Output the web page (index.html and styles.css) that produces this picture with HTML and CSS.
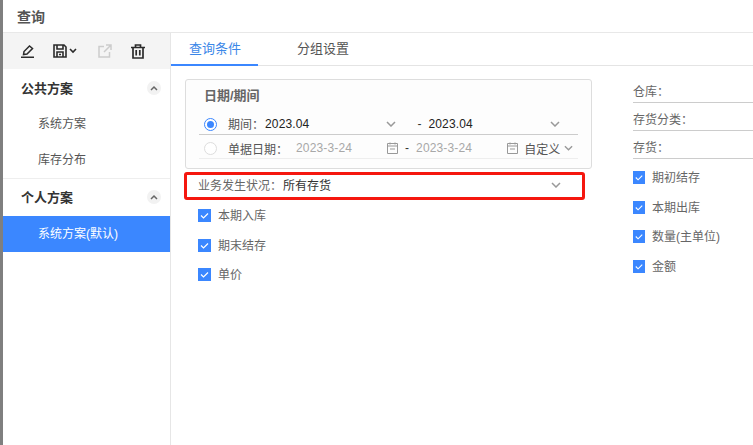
FILE: index.html
```html
<!DOCTYPE html>
<html lang="zh">
<head>
<meta charset="utf-8">
<title>查询</title>
<link rel="stylesheet" href="styles.css">
</head>
<body>
<div class="page">
  <div class="strip"></div>
  <div class="dialog">
    <header class="title">查询</header>
    <div class="body">
      <aside class="side">
        <div class="toolbar">
          <svg class="ic pen" viewBox="0 0 13 14"><path d="M0 13.200h13M2.500 10.500l.5-3L8.500 2l3 2.500L6 10z" fill="none" stroke="#2b2b2b" stroke-width="1.500"/></svg>
          <svg class="ic save" viewBox="0 0 14 14"><path d="M1 1h10l2 2v10H1zM4 1v4h6V1M4 13V8h6v5M6 10.500h2" fill="none" stroke="#2b2b2b" stroke-width="1.600"/></svg>
          <svg class="ic caret" viewBox="0 0 8 6"><path d="M1 1l3 3 3-3" fill="none" stroke="#2b2b2b" stroke-width="1.600"/></svg>
          <svg class="ic ext" viewBox="0 0 14 14"><path d="M11.500 8v5H1V2.500h5M8 1h5v5M13 1L6 8" fill="none" stroke="#ccc" stroke-width="1.500"/></svg>
          <svg class="ic bin" viewBox="0 0 14 15"><path d="M0 3.500h14M4.500 3.500V1h5v2.500M2 3.500V14h10V3.500M5.200 6v5.500M8.800 6v5.500" fill="none" stroke="#2b2b2b" stroke-width="1.700"/></svg>
        </div>
        <div class="sec"><span>公共方案</span><i class="up"><svg viewBox="0 0 8 6"><path d="M1 5l3-3 3 3" fill="none" stroke="#666" stroke-width="1.500"/></svg></i></div>
        <div class="item">系统方案</div>
        <div class="item">库存分布</div>
        <div class="sec sec-b"><span>个人方案</span><i class="up"><svg viewBox="0 0 8 6"><path d="M1 5l3-3 3 3" fill="none" stroke="#666" stroke-width="1.500"/></svg></i></div>
        <div class="item active">系统方案(默认)</div>
      </aside>
      <main class="main">
        <nav class="tabs">
          <span class="tab on">查询条件</span>
          <span class="tab">分组设置</span>
        </nav>
        <div class="content">
          <section class="left">
            <div class="group">
              <div class="group-title">日期/期间</div>
              <div class="row row-a">
                <span class="radio on"></span>
                <span class="lab">期间：</span><span class="val v1">2023.04</span>
                <svg class="chev c1" viewBox="0 0 10 6"><path d="M1 1l4 4 4-4" fill="none" stroke="#999" stroke-width="1.500"/></svg>
                <span class="dash">-</span><span class="val v2">2023.04</span>
                <svg class="chev c2" viewBox="0 0 10 6"><path d="M1 1l4 4 4-4" fill="none" stroke="#999" stroke-width="1.500"/></svg>
              </div>
              <div class="row row-b">
                <span class="radio"></span>
                <span class="lab l2">单据日期：</span><span class="val dim d1">2023-3-24</span>
                <svg class="cal" viewBox="0 0 11 12"><path d="M.5 1.500h10v10H.5zM.5 4h10M3 .5v2M8 .5v2M3 7h5" fill="none" stroke="#999"/></svg>
                <span class="dash d">-</span><span class="val dim d2">2023-3-24</span>
                <svg class="cal c3" viewBox="0 0 11 12"><path d="M.5 1.500h10v10H.5zM.5 4h10M3 .5v2M8 .5v2M3 7h5" fill="none" stroke="#999"/></svg>
                <span class="lab cust">自定义</span>
                <svg class="chev c4" viewBox="0 0 10 6"><path d="M1 1l4 4 4-4" fill="none" stroke="#999" stroke-width="1.500"/></svg>
              </div>
            </div>
            <div class="status">
              <span class="lab gray">业务发生状况：</span><span class="lab">所有存货</span>
              <svg class="chev c5" viewBox="0 0 10 6"><path d="M1 1l4 4 4-4" fill="none" stroke="#999" stroke-width="1.500"/></svg>
              <div class="redbox"></div>
            </div>
            <div class="checks">
              <label class="chk"><span class="box"><svg viewBox="0 0 13 13"><path d="M3 6.500l2.500 2.500L10 4.500" fill="none" stroke="#fff" stroke-width="1.200"/></svg></span>本期入库</label>
              <label class="chk"><span class="box"><svg viewBox="0 0 13 13"><path d="M3 6.500l2.500 2.500L10 4.500" fill="none" stroke="#fff" stroke-width="1.200"/></svg></span>期末结存</label>
              <label class="chk"><span class="box"><svg viewBox="0 0 13 13"><path d="M3 6.500l2.500 2.500L10 4.500" fill="none" stroke="#fff" stroke-width="1.200"/></svg></span>单价</label>
            </div>
          </section>
          <section class="right">
            <div class="field">仓库：</div>
            <div class="field">存货分类：</div>
            <div class="field">存货：</div>
            <div class="checks r">
              <label class="chk"><span class="box"><svg viewBox="0 0 13 13"><path d="M3 6.500l2.500 2.500L10 4.500" fill="none" stroke="#fff" stroke-width="1.200"/></svg></span>期初结存</label>
              <label class="chk"><span class="box"><svg viewBox="0 0 13 13"><path d="M3 6.500l2.500 2.500L10 4.500" fill="none" stroke="#fff" stroke-width="1.200"/></svg></span>本期出库</label>
              <label class="chk"><span class="box"><svg viewBox="0 0 13 13"><path d="M3 6.500l2.500 2.500L10 4.500" fill="none" stroke="#fff" stroke-width="1.200"/></svg></span>数量(主单位)</label>
              <label class="chk"><span class="box"><svg viewBox="0 0 13 13"><path d="M3 6.500l2.500 2.500L10 4.500" fill="none" stroke="#fff" stroke-width="1.200"/></svg></span>金额</label>
            </div>
          </section>
        </div>
      </main>
    </div>
  </div>
</div>
</body>
</html>
```
FILE: styles.css
```css
* { box-sizing: border-box; }
html, body { margin: 0; height: 100%; overflow: hidden; background: #fff; }
body { font-family: "Liberation Sans", "Noto Sans CJK SC", sans-serif; font-size: 12px; color: #444; }
.page { display: flex; width: 753px; height: 445px; }
.strip { width: 3px; background: #7f7f7f; flex: none; }
.dialog { flex: 1; display: flex; flex-direction: column; min-width: 0; }
.title { height: 33px; flex: none; padding: 8px 0 0 14px; font-size: 14px; line-height: 18px; font-weight: bold; color: #555; border-bottom: 1px solid #e8e8e8; }
.body { flex: 1; display: flex; min-height: 0; }

.side { width: 168px; flex: none; border-right: 1px solid #e6e6e6; }
.toolbar { height: 36px; background: #f4f4f4; display: flex; align-items: center; padding-left: 18px; }
.ic { display: block; flex: none; }
.pen { width: 13px; height: 14px; }
.save { width: 14px; height: 14px; margin-left: 19px; }
.caret { width: 8px; height: 6px; margin-left: 2px; }
.ext { width: 14px; height: 14px; margin-left: 21px; }
.bin { width: 14px; height: 15px; margin-left: 19px; }
.sec { height: 37px; display: flex; align-items: center; justify-content: space-between; padding: 0 9px 1px 18px; font-size: 13px; font-weight: bold; color: #333; }
.sec-b { height: 38px; border-top: 1px solid #eee; padding-bottom: 3px; }
.up { width: 14px; height: 14px; border-radius: 50%; background: #f2f2f2; display: flex; align-items: center; justify-content: center; margin-top: 2px; }
.up svg { width: 8px; height: 6px; display: block; }
.item { height: 36px; line-height: 36px; padding-left: 35px; color: #555; }
.active { background: #3b87ff; color: #fff; font-weight: normal; }

.main { flex: 1; min-width: 0; }
.tabs { height: 33px; display: flex; border-bottom: 1px solid #e4e4e4; font-size: 13px; }
.tab { width: 87px; text-align: center; line-height: 31px; color: #555; }
.tab + .tab { width: auto; padding-left: 39px; }
.tab.on { color: #3b87e8; border-bottom: 2px solid #3b87ff; height: 33px; padding-left: 1px; }
.content { display: flex; padding: 9px 0 0 14px; }
.left { width: 407px; flex: none; margin-top: 4px; }
.right { margin-left: 41px; flex: 1; color: #666; }

.group { height: 90px; border: 1px solid #ddd; border-radius: 3px; padding: 0 13px; background: #fdfdfd; }
.group-title { font-size: 13px; font-weight: bold; color: #666; line-height: 18px; margin: 7px 0 0 5px; height: 18px; }
.row { display: flex; align-items: center; color: #555; }
.row-a { height: 28px; border-bottom: 1px solid #ccc; padding-top: 6px; margin-top: 2px; }
.row-b { height: 24px; border-bottom: 1px solid #eee; padding-top: 3px; }
.radio { width: 13px; height: 13px; border-radius: 50%; border: 1px solid #ddd; margin-left: 5px; flex: none; background: #fff; position: relative; }
.radio.on { border-color: #3b87ff; margin-top: 2px; }
.radio.on::after { content: ""; position: absolute; left: 2px; top: 2px; width: 7px; height: 7px; border-radius: 50%; background: #3b87ff; }
.lab { white-space: nowrap; }
.row .lab { margin-left: 11px; }
.val { color: #222; white-space: nowrap; letter-spacing: .15px; }
.dim { color: #a8a8a8; }
.v1 { margin-left: 1px; }
.chev { width: 10px; height: 6px; display: block; flex: none; }
.c1 { margin-left: 77px; }
.dash { color: #333; margin-left: 21px; width: 4px; }
.v2 { margin-left: 7px; }
.c2 { margin-left: 77px; }
.d1 { margin-left: 8px; }
.cal { width: 11px; height: 12px; flex: none; margin-left: 35px; }
.dash.d { margin-left: 7px; }
.d2 { margin-left: 7px; }
.c3 { margin-left: 35px; }
.row .cust { margin-left: 6px; }
.c4 { margin-left: 4px; width: 9px; }

.status { position: relative; display: flex; align-items: center; height: 26px; margin: 4px 7px 0 13px; width: 380px; border-bottom: 1px solid #bbb; color: #333; padding-bottom: 2px; }
.gray { color: #666; margin-right: 1px; }
.c5 { margin-left: auto; margin-right: 17px; }
.redbox { position: absolute; left: -14px; top: -1px; width: 401px; height: 28px; border: 3px solid #f5170f; border-radius: 3px; }

.checks { margin: 1px 0 0 13px; }
.chk { display: flex; align-items: center; height: 29.5px; color: #666; gap: 7px; white-space: nowrap; }
.box { width: 13px; height: 13px; background: #3b87ff; flex: none; margin-top: 2px; }
.box svg { display: block; width: 100%; height: 100%; }
.field { height: 28px; padding-top: 8px; line-height: 18px; border-bottom: 1px solid #ccc; width: 140px; }
.checks.r { margin: 3px 0 0 0; }
.checks.r .box { width: 12px; }
```
